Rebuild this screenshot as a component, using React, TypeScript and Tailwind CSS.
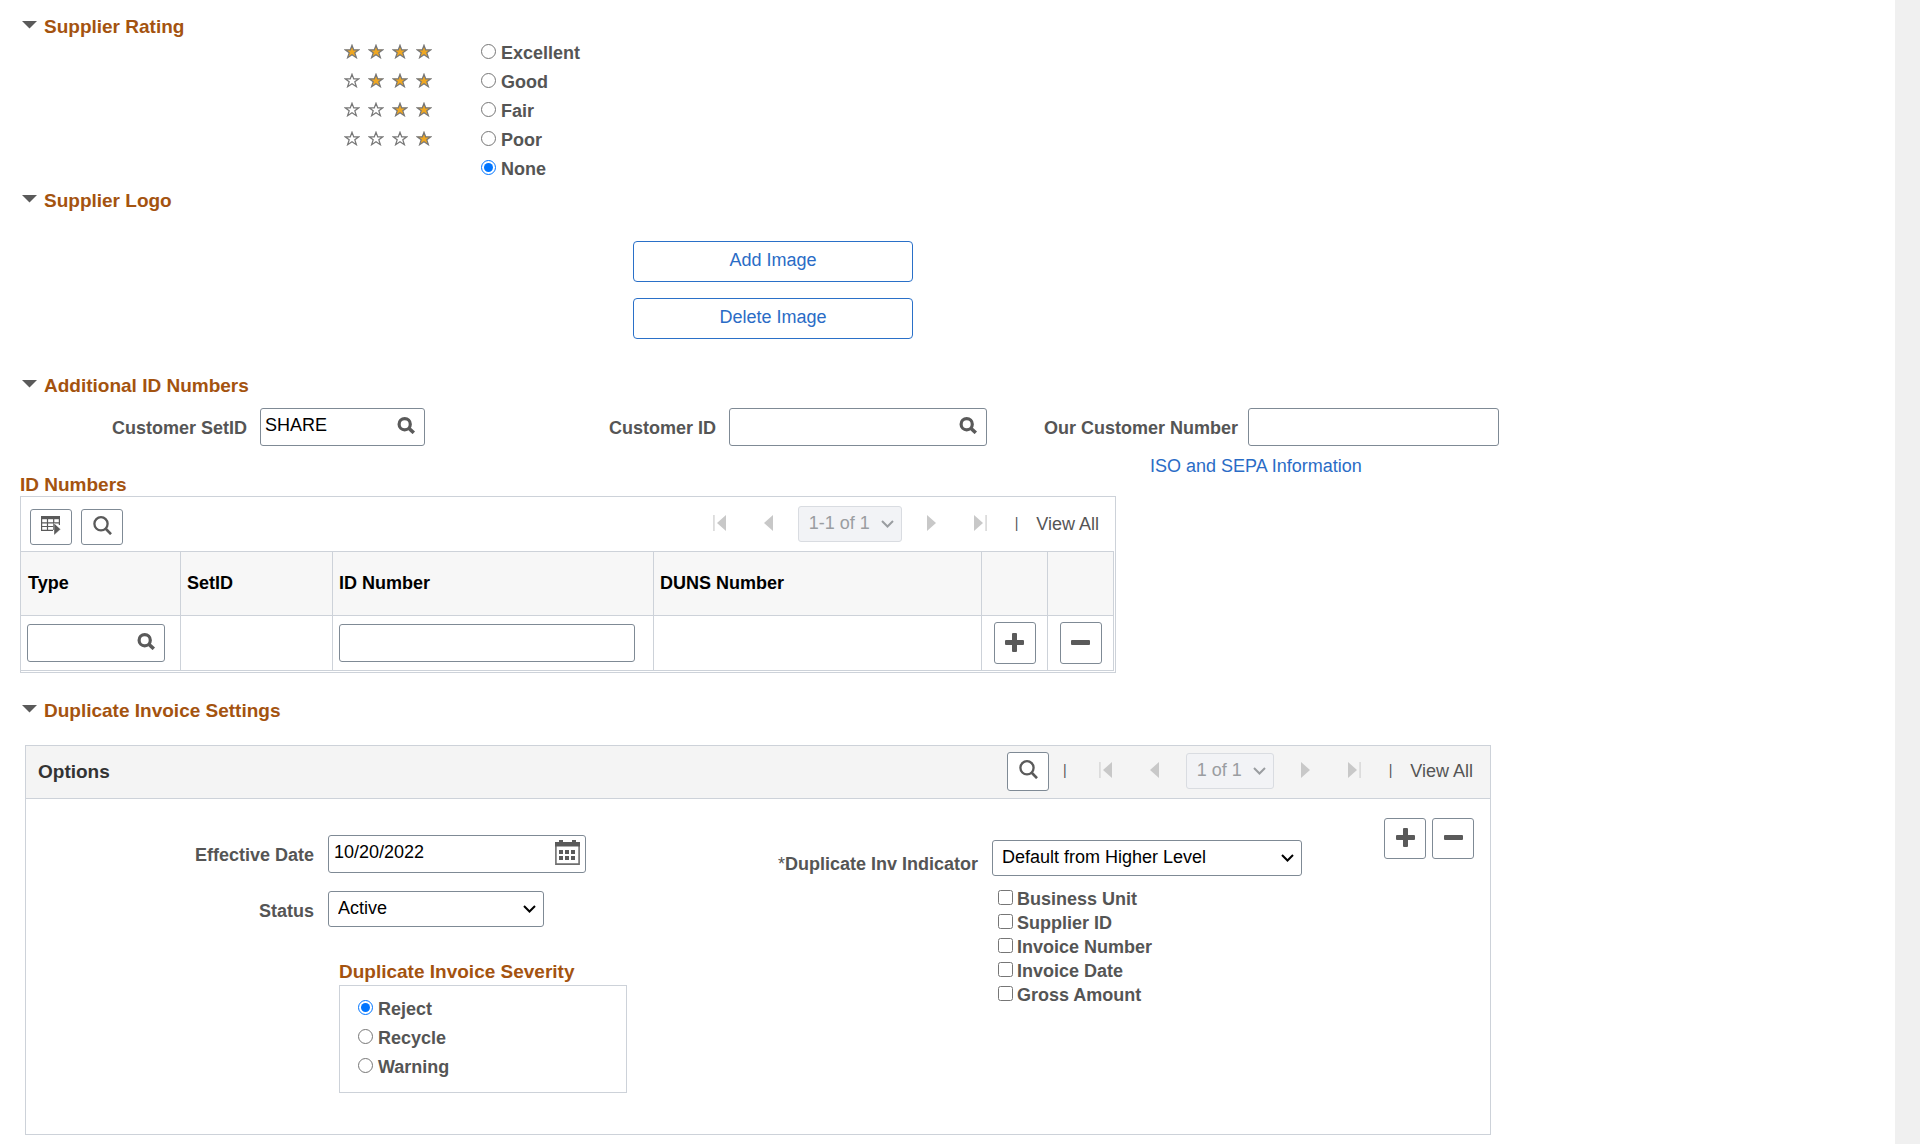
import { ReactNode } from 'react';

const ratings = [
  { label: 'Excellent', stars: 4 },
  { label: 'Good', stars: 3 },
  { label: 'Fair', stars: 2 },
  { label: 'Poor', stars: 1 },
  { label: 'None', stars: 0 }
];

const severities = ['Reject', 'Recycle', 'Warning'];
const invoiceFields = ['Business Unit', 'Supplier ID', 'Invoice Number', 'Invoice Date', 'Gross Amount'];

const squareButton = 'flex w-[42px] shrink-0 items-center justify-center rounded-[3px] border border-[#7f8a95] bg-white text-[#5a5a5a]';
const textBox = 'rounded-[3px] border border-[#7f8a95] bg-white h-[38px]';

function Star({ filled }: { filled: boolean }) {
  return (
    <svg width="16" height="15" viewBox="0 0 16 15" aria-hidden="true">
      <path
        d="M8 1.2 9.7 5.8H14.8L10.8 8.8 12.4 13.7 8 10.7 3.6 13.7 5.2 8.8 1.2 5.8H6.3Z"
        fill={filled ? '#efa722' : '#fff'}
        stroke="#777"
        strokeWidth="1.2"
      />
    </svg>
  );
}

function LookupIcon() {
  return (
    <svg width="18" height="17" viewBox="0 0 18 17" fill="none" stroke="#5a5a5a" aria-hidden="true">
      <circle cx="7.7" cy="7.2" r="5.6" strokeWidth="3.2" />
      <path d="M11.8 11.2 16.8 15.8" strokeWidth="3.6" />
    </svg>
  );
}

function SearchIcon() {
  return (
    <svg width="19" height="19" viewBox="0 0 19 19" fill="none" stroke="currentColor" aria-hidden="true">
      <circle cx="8" cy="7.8" r="6.6" strokeWidth="2.3" />
      <path d="M12.5 12.5 18 18.2" strokeWidth="2.6" />
    </svg>
  );
}

function GridActionIcon() {
  return (
    <svg width="20" height="19" viewBox="0 0 20 19" aria-hidden="true">
      <path d="M0 0H19V3.2H0Z" fill="#5a5a5a" />
      <path d="M.6 3V14.3H12M6.5 3V14M12.7 3V14M18.4 3V9M0 6.8H19M0 10.5H13" fill="none" stroke="#5a5a5a" strokeWidth="1.2" />
      <path d="M13 7.2 19.6 13.2 13 19.2Z" fill="#5a5a5a" stroke="#fff" strokeWidth=".4" />
    </svg>
  );
}

function PlusIcon() {
  return (
    <svg width="19" height="19" viewBox="0 0 19 19" fill="currentColor" aria-hidden="true">
      <rect x="0" y="7" width="19" height="5" rx="1" />
      <rect x="7" y="0" width="5" height="19" rx="1" />
    </svg>
  );
}

function MinusIcon() {
  return (
    <svg width="19" height="19" viewBox="0 0 19 19" aria-hidden="true">
      <rect x="0" y="7" width="19" height="5" rx="1" fill="currentColor" />
    </svg>
  );
}

function CalendarIcon() {
  return (
    <svg width="25" height="25" viewBox="0 0 25 25" aria-hidden="true">
      <path d="M.9 4V24.1H24.1V4" fill="#fff" stroke="#6e6e6e" strokeWidth="1.6" />
      <path d="M0 2H4V0H8V2H17V0H21V2H25V6.5H0Z" fill="#5a5a5a" />
      <path d="M4 10h4v4H4zM10 10h4v4h-4zM16 10h4v4h-4zM4 16h4v4H4zM10 16h4v4h-4zM16 16h4v4h-4z" fill="#5a5a5a" />
    </svg>
  );
}

function Chevron() {
  return (
    <svg className="pointer-events-none absolute right-2 top-1/2 -translate-y-1/2" width="13" height="9" viewBox="0 0 13 9" fill="none" stroke="currentColor" strokeWidth="2" aria-hidden="true">
      <path d="M1 1.5 6.5 7 12 1.5" />
    </svg>
  );
}

function SectionTitle({ children }: { children: ReactNode }) {
  return (
    <h2 className="flex h-6 items-center text-[19px] font-bold leading-6 text-[#a4530f]">
      <button type="button" className="flex items-center gap-[7px] pl-0.5">
        <svg className="mb-1" width="15" height="8" viewBox="0 0 15 8" aria-hidden="true">
          <path d="M0 0H15L7.5 7.6Z" fill="#5a5a5a" />
        </svg>
        {children}
      </button>
    </h2>
  );
}

function Radio({ name, label, checked }: { name: string; label: string; checked: boolean }) {
  return (
    <label className="flex h-[29px] items-center gap-[5px] font-bold">
      <input type="radio" name={name} defaultChecked={checked} className="mb-1 size-[15px] accent-[#0075ff]" />
      <span className="pb-0.5">{label}</span>
    </label>
  );
}

function LookupField({ id, value, label, className }: { id: string; value?: string; label?: string; className: string }) {
  return (
    <div className={`flex shrink-0 items-center pb-1 pl-1 pr-[9px] ${textBox} ${className}`}>
      <input id={id} aria-label={label} defaultValue={value} className="w-full min-w-0 flex-1 bg-transparent text-black outline-none" />
      <button type="button" aria-label="Look up" className="shrink-0">
        <LookupIcon />
      </button>
    </div>
  );
}

function Pager({ range, className }: { range: string; className: string }) {
  return (
    <div className="flex items-center">
      <button type="button" disabled aria-label="First">
        <svg width="13" height="16" viewBox="0 0 13 16" className="mb-0.5">
          <path d="M0 0H1.8V16H0Z" fill="#dcdcdc" />
          <path d="M13 0V16L4 8Z" fill="#c8c8c8" />
        </svg>
      </button>
      <button type="button" disabled aria-label="Previous" className="ml-[38px] mr-[25px]">
        <svg width="9" height="16" viewBox="0 0 9 16" className="mb-0.5">
          <path d="M9 0V16L0 8Z" fill="#c8c8c8" />
        </svg>
      </button>
      <div className={`relative text-[#9a9da1] ${className}`}>
        <select disabled aria-label="Rows" className="h-9 w-full appearance-none rounded-[3px] border border-[#d9dce1] bg-[#f2f3f6] pb-0.5 pl-2.5 opacity-100">
          <option>{range}</option>
        </select>
        <Chevron />
      </div>
      <button type="button" disabled aria-label="Next" className="ml-[25px] mr-[38px]">
        <svg width="9" height="16" viewBox="0 0 9 16" className="mb-0.5">
          <path d="M0 0V16L9 8Z" fill="#c8c8c8" />
        </svg>
      </button>
      <button type="button" disabled aria-label="Last">
        <svg width="13" height="16" viewBox="0 0 13 16" className="mb-0.5">
          <path d="M11.2 0H13V16H11.2Z" fill="#dcdcdc" />
          <path d="M0 0V16L9 8Z" fill="#c8c8c8" />
        </svg>
      </button>
      <span className="ml-7 pb-0.5 text-sm">|</span>
      <a href="#" className="ml-[18px] whitespace-nowrap">View All</a>
    </div>
  );
}

function SupplierRating() {
  return (
    <section>
      <SectionTitle>Supplier Rating</SectionTitle>
      {ratings.map((r) => (
        <div key={r.label} className="flex items-center pl-[324px]">
          <div className="flex w-[137px] gap-2 pb-1">
            {r.stars > 0 && [4, 3, 2, 1].map((n) => <Star key={n} filled={n <= r.stars} />)}
          </div>
          <Radio name="rating" label={r.label} checked={r.label === 'None'} />
        </div>
      ))}
    </section>
  );
}

function SupplierLogo() {
  return (
    <section className="mt-[5px]">
      <SectionTitle>Supplier Logo</SectionTitle>
      <div className="mt-7 flex flex-col gap-4 pl-[613px]">
        {['Add Image', 'Delete Image'].map((text) => (
          <button key={text} type="button" className="h-[41px] w-[280px] rounded border border-[#2a70c8] pb-1 text-[#2a6cc6]">
            {text}
          </button>
        ))}
      </div>
    </section>
  );
}

function IdNumbersGrid() {
  return (
    <div className="w-full max-w-[1096px] border border-[#cdd2d9] pb-px pr-px">
      <div className="flex h-[54px] items-center gap-[9px] pl-[9px] pr-[15px]">
        <button type="button" aria-label="Grid actions" className={`mt-1.5 h-9 pb-1 ${squareButton}`}>
          <GridActionIcon />
        </button>
        <button type="button" aria-label="Find" className={`mt-1.5 h-9 pb-1 ${squareButton}`}>
          <SearchIcon />
        </button>
        <div className="ml-auto">
          <Pager range="1-1 of 1" className="w-[104px]" />
        </div>
      </div>
      <table className="w-full table-fixed border-separate border-spacing-0 border-b border-[#cdd2d9] text-left [&_td]:border-r [&_td]:border-t [&_td]:border-[#cdd2d9] [&_th]:border-r [&_th]:border-t [&_th]:border-[#cdd2d9] [&_th]:pb-0.5">
        <thead className="bg-[#f7f7f7] text-black">
          <tr className="h-16">
            <th className="w-[160px] pl-[7px]">Type</th>
            <th className="w-[152px] pl-1.5">SetID</th>
            <th className="w-[321px] pl-1.5">ID Number</th>
            <th className="pl-1.5">DUNS Number</th>
            <th className="w-[66px]" aria-label="Add" />
            <th className="w-[66px]" aria-label="Delete" />
          </tr>
        </thead>
        <tbody>
          <tr className="h-[55px]">
            <td className="pl-1.5">
              <LookupField id="type" label="Type" className="w-[138px]" />
            </td>
            <td />
            <td className="pl-1.5">
              <input aria-label="ID Number" className={`block w-[296px] px-1 ${textBox}`} />
            </td>
            <td />
            <td>
              <button type="button" aria-label="Add row" className={`mx-auto h-[42px] pb-0.5 ${squareButton}`}>
                <PlusIcon />
              </button>
            </td>
            <td>
              <button type="button" aria-label="Delete row" className={`mx-auto h-[42px] pb-0.5 ${squareButton}`}>
                <MinusIcon />
              </button>
            </td>
          </tr>
        </tbody>
      </table>
    </div>
  );
}

function AdditionalIds() {
  return (
    <section className="mt-[35px]">
      <SectionTitle>Additional ID Numbers</SectionTitle>
      <div className="mt-2.5 flex items-center whitespace-nowrap font-bold">
        <label htmlFor="setid" className="w-[227px] pt-0.5 text-right">Customer SetID</label>
        <LookupField id="setid" value="SHARE" className="ml-[13px] w-[165px] font-normal" />
        <label htmlFor="customer" className="w-[291px] pt-0.5 text-right">Customer ID</label>
        <LookupField id="customer" className="ml-[13px] w-[258px] font-normal" />
        <label htmlFor="our-number" className="w-[251px] pt-0.5 text-right">Our Customer Number</label>
        <input id="our-number" className={`ml-2.5 w-[251px] px-1 font-normal ${textBox}`} />
      </div>
      <div className="flex h-[50px] items-start">
        <h3 className="w-[1130px] self-end text-[19px] font-bold leading-[22px] text-[#a4530f]">ID Numbers</h3>
        <a href="#" className="pt-2 leading-6 text-[#2a6cc6]">ISO and SEPA Information</a>
      </div>
      <IdNumbersGrid />
    </section>
  );
}

function DuplicateInvoice() {
  return (
    <section className="mt-[26px]">
      <SectionTitle>Duplicate Invoice Settings</SectionTitle>
      <div className="ml-[5px] mt-[22px] w-full max-w-[1466px] border border-[#cdd2d9]">
        <div className="flex h-[53px] items-center border-b border-[#cdd2d9] bg-[#f4f4f4] pb-0.5 pl-3 pr-[17px]">
          <h3 className="pt-px text-[19px] font-bold text-[#333]">Options</h3>
          <button type="button" aria-label="Find" className={`ml-auto h-[39px] pb-1 ${squareButton}`}>
            <SearchIcon />
          </button>
          <span className="ml-3.5 mr-8 pb-0.5 text-sm">|</span>
          <Pager range="1 of 1" className="mx-0.5 w-[88px]" />
        </div>
        <div className="flex pb-[41px] pr-4">
          <div className="w-[640px] pt-9">
            <div className="flex items-center gap-3.5">
              <label htmlFor="eff-date" className="w-[288px] pt-0.5 text-right font-bold">Effective Date</label>
              <div className={`flex w-[258px] items-center pb-1 pl-[5px] pr-[5px] ${textBox}`}>
                <input id="eff-date" defaultValue="10/20/2022" className="min-w-0 flex-1 bg-transparent text-black outline-none" />
                <button type="button" aria-label="Choose a date">
                  <CalendarIcon />
                </button>
              </div>
            </div>
            <div className="mt-[18px] flex items-center gap-3.5">
              <label htmlFor="status" className="w-[288px] pt-1 text-right font-bold">Status</label>
              <div className="relative w-[216px] text-black">
                <select id="status" className="h-9 w-full appearance-none rounded-[3px] border border-[#7f8a95] bg-white pb-0.5 pl-[9px]">
                  <option>Active</option>
                  <option>Inactive</option>
                </select>
                <Chevron />
              </div>
            </div>
            <fieldset className="ml-[313px] mt-[33px] w-[288px]">
              <legend className="text-[19px] font-bold leading-6 text-[#a4530f]">Duplicate Invoice Severity</legend>
              <div className="mt-px border border-[#cdd2d9] pb-2.5 pl-[18px] pt-[9px]">
                {severities.map((s) => (
                  <Radio key={s} name="severity" label={s} checked={s === 'Reject'} />
                ))}
              </div>
            </fieldset>
          </div>
          <div className="pt-[41px]">
            <div className="flex items-center gap-3.5">
              <label htmlFor="indicator" className="w-[312px] pt-3 text-right font-bold">
                <span className="font-normal">*</span>Duplicate Inv Indicator
              </label>
              <div className="relative w-[310px] text-black">
                <select id="indicator" className="h-9 w-full appearance-none rounded-[3px] border border-[#7f8a95] bg-white pb-0.5 pl-[9px]">
                  <option>Default from Higher Level</option>
                </select>
                <Chevron />
              </div>
            </div>
            <div className="mt-[11px] pl-[332px]">
              {invoiceFields.map((f) => (
                <label key={f} className="flex items-center gap-1 font-bold leading-6">
                  <input type="checkbox" className="mb-1 size-[15px]" />
                  {f}
                </label>
              ))}
            </div>
          </div>
          <div className="ml-auto flex gap-1.5 pt-[19px]">
            <button type="button" aria-label="Add" className={`h-[41px] pb-0.5 ${squareButton}`}>
              <PlusIcon />
            </button>
            <button type="button" aria-label="Delete" className={`h-[41px] pb-0.5 ${squareButton}`}>
              <MinusIcon />
            </button>
          </div>
        </div>
      </div>
    </section>
  );
}

export default function App() {
  return (
    <div className="flex min-h-screen bg-[#f0f0f0] pr-[25px] font-['Liberation_Sans',Arial,sans-serif] text-[18px] leading-5 text-[#555]">
      <main className="flex-1 bg-white pb-2 pl-5 pt-[15px]">
        <SupplierRating />
        <SupplierLogo />
        <AdditionalIds />
        <DuplicateInvoice />
      </main>
    </div>
  );
}
